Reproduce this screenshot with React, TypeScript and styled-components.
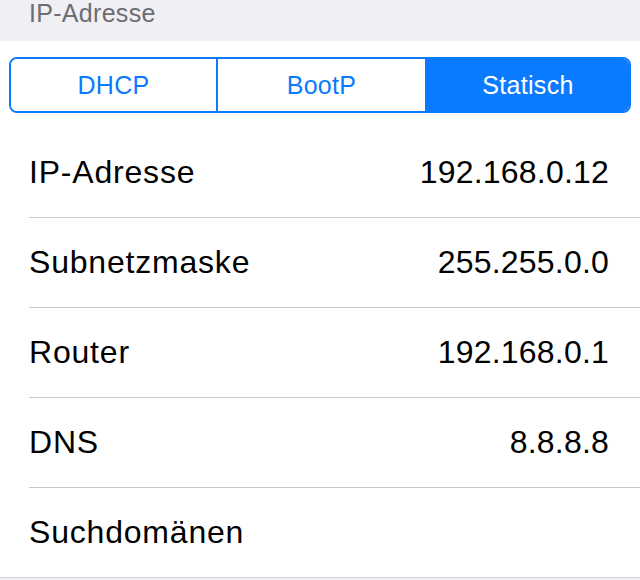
import React, { useState } from "react";
import styled, { createGlobalStyle } from "styled-components";

const GlobalStyle = createGlobalStyle`
  html, body {
    margin: 0;
    padding: 0;
    background: #efeff4;
    font-family: "Liberation Sans", Arial, sans-serif;
  }
`;

const Page = styled.div`
  width: 640px;
  height: 580px;
  overflow: hidden;
  background: #efeff4;
`;

const SectionHeader = styled.div`
  height: 41px;
  padding-left: 29px;
  font-size: 25px;
  line-height: 26px;
  color: #6d6d72;
  letter-spacing: 0.3px;
`;

const Group = styled.div`
  background: #fff;
  border-bottom: 1px solid #d8d8dc;
`;

const SegmentWrap = styled.div`
  padding: 16px 9px 15px;
`;

const Segmented = styled.div`
  display: grid;
  grid-template-columns: 205px 209px 1fr;
  height: 56px;
  box-sizing: border-box;
  border: 2px solid #0a7aff;
  border-radius: 8px;
  overflow: hidden;
`;

const Segment = styled.button<{ $active: boolean }>`
  appearance: none;
  margin: 0;
  padding: 0;
  border: none;
  border-left: 2px solid #0a7aff;
  &:first-child {
    border-left: none;
  }
  background: ${(p) => (p.$active ? "#0a7aff" : "#fff")};
  color: ${(p) => (p.$active ? "#fff" : "#0a7aff")};
  font-family: "Liberation Sans", Arial, sans-serif;
  font-size: 25px;
  letter-spacing: 0.3px;
  cursor: pointer;
`;

const Row = styled.div`
  padding-left: 29px;
`;

const RowInner = styled.div<{ $last?: boolean }>`
  display: flex;
  align-items: center;
  justify-content: space-between;
  height: 89px;
  padding-right: 31px;
  border-bottom: ${(p) => (p.$last ? "none" : "1px solid #c8c7cc")};
  font-size: 32px;
  color: #000;
`;

const Label = styled.span`
  letter-spacing: 0.8px;
`;

const Value = styled.span`
  letter-spacing: 0.2px;
`;

const modes = ["DHCP", "BootP", "Statisch"];

const fields = [
  { label: "IP-Adresse", value: "192.168.0.12" },
  { label: "Subnetzmaske", value: "255.255.0.0" },
  { label: "Router", value: "192.168.0.1" },
  { label: "DNS", value: "8.8.8.8" },
  { label: "Suchdomänen", value: "" },
];

export default function App() {
  const [mode, setMode] = useState("Statisch");

  return (
    <Page>
      <GlobalStyle />
      <SectionHeader>IP-Adresse</SectionHeader>
      <Group>
        <SegmentWrap>
          <Segmented>
            {modes.map((m) => (
              <Segment key={m} $active={m === mode} onClick={() => setMode(m)}>
                {m}
              </Segment>
            ))}
          </Segmented>
        </SegmentWrap>
        {fields.map((f, i) => (
          <Row key={f.label}>
            <RowInner $last={i === fields.length - 1}>
              <Label>{f.label}</Label>
              <Value>{f.value}</Value>
            </RowInner>
          </Row>
        ))}
      </Group>
    </Page>
  );
}
